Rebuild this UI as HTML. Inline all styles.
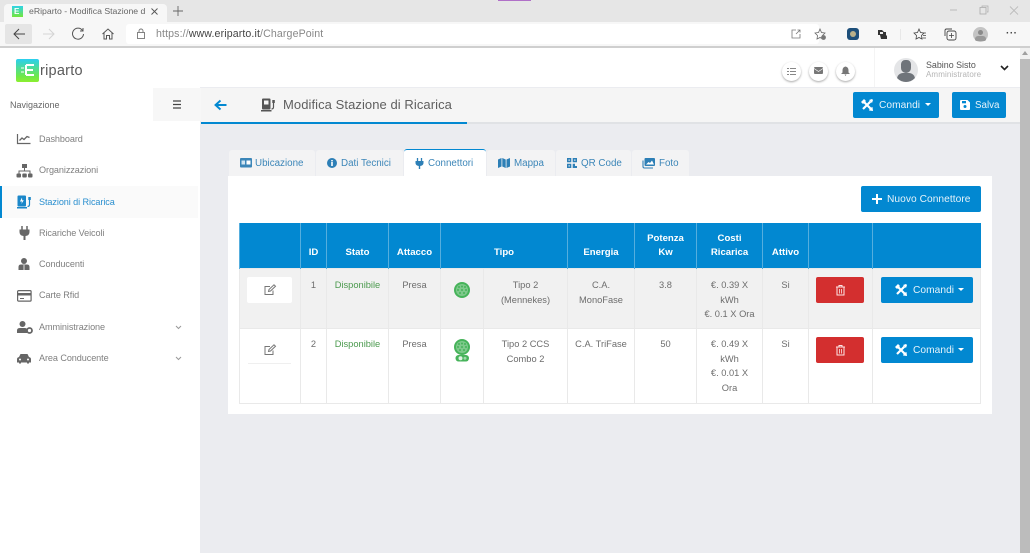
<!DOCTYPE html>
<html><head><meta charset="utf-8"><title>eRiparto</title>
<style>
html,body{margin:0;padding:0}
body{width:1030px;height:553px;overflow:hidden;position:relative;background:#ebecf0;font-family:"Liberation Sans",sans-serif;font-size:10px;color:#6c6c6c}
.a{position:absolute}
.t{position:absolute;white-space:nowrap;line-height:14px}
svg{position:absolute;overflow:visible}
.side{font-size:9.1px;color:#7f7f7f;left:39px;letter-spacing:-.08px}
.tab{position:absolute;top:150px;height:26px;background:#f3f3f4;border-radius:3px 3px 0 0;color:#3c86b8;font-size:9.8px}
.tab span{position:absolute;top:7px;white-space:nowrap;line-height:14px}
.tab svg{top:8px}
.btn{position:absolute;background:#0288d1;border-radius:2px;color:#e6f3fa;font-size:10.2px;letter-spacing:.05px}
.btn span{position:absolute;top:7px;line-height:14px;white-space:nowrap}
table{position:absolute;left:239px;top:223px;width:742px;border-collapse:collapse;table-layout:fixed;font-size:9.3px;line-height:14.6px;color:#6d6d6d}
th{background:#0288d1;color:#fff;font-size:9.6px;font-weight:bold;border:1px solid #55aede;border-top:0;border-bottom:0;padding:0;height:45px;vertical-align:middle;text-align:center;line-height:14.6px}
th.b{vertical-align:bottom;padding-bottom:7px;height:38px}
td{border:1px solid #e9e9e9;vertical-align:top;text-align:center;padding:8px 3px 0}
tr.r1 td{background:#f1f1f1;height:50px;padding-top:9px}
tr.r2 td{background:#fff;height:66px}
.g{color:#4b9a4e}
</style></head><body>

<!-- browser chrome -->
<div class="a" style="left:0;top:0;width:1030px;height:22px;background:#e6e6e6"></div>
<div class="a" style="left:498px;top:0;width:33px;height:1px;background:#b070c8"></div>
<div class="a" style="left:4px;top:4px;width:163px;height:18px;background:#f7f7f7;border-radius:4px 4px 0 0"></div>
<div class="a" style="left:12px;top:6px;width:11px;height:11px;background:linear-gradient(#2fd3e8,#74e63a)"></div>
<div class="t" style="left:14px;top:5px;font-size:8px;font-weight:bold;color:#fff">E</div>
<div class="t" style="left:29px;top:4px;font-size:8.7px;color:#666;width:116px;overflow:hidden">eRiparto - Modifica Stazione di Ri</div>
<svg style="left:150px;top:7px" width="9" height="9"><path d="M1.500 1.500L7.500 7.500M7.500 1.500L1.500 7.500" stroke="#555" stroke-width=".9"/></svg>
<svg style="left:172px;top:5px" width="12" height="12"><path d="M6 1V11M1 6H11" stroke="#666" stroke-width=".9"/></svg>
<svg style="left:950px;top:5px" width="75" height="12"><path d="M0 5H7" stroke="#bbb" stroke-width="1"/><rect x="30" y="2.500" width="6" height="6.500" fill="none" stroke="#aaa" stroke-width=".8"/><path d="M32 2V1H38V7H37" fill="none" stroke="#aaa" stroke-width=".7"/><path d="M60 1.500L68 9.500M68 1.500L60 9.500" stroke="#bbb" stroke-width=".9"/></svg>
<div class="a" style="left:0;top:22px;width:1030px;height:24px;background:#f7f7f7"></div>
<div class="a" style="left:5px;top:24px;width:27px;height:20px;background:#e5e5e5;border-radius:2px"></div>
<svg style="left:12px;top:27px" width="14" height="14"><path d="M13 7H2M7 2L2 7L7 12" fill="none" stroke="#444" stroke-width="1"/></svg>
<svg style="left:42px;top:27px" width="14" height="14"><path d="M1 7H12M7 2L12 7L7 12" fill="none" stroke="#d4d4d4" stroke-width="1"/></svg>
<svg style="left:71px;top:27px" width="14" height="14"><path d="M11.500 3.500A5.500 5.500 0 1 0 12.500 7M12 1V4H9" fill="none" stroke="#555" stroke-width="1"/></svg>
<svg style="left:101px;top:27px" width="14" height="14"><path d="M1.500 7L7 2L12.500 7M3 6V12H5.500V8.500H8.500V12H11V6" fill="none" stroke="#555" stroke-width="1"/></svg>
<div class="a" style="left:126px;top:24px;width:693px;height:20px;background:#fff;border-radius:3px"></div>
<svg style="left:136px;top:28px" width="10" height="12"><rect x="1.500" y="4.500" width="7" height="6" fill="none" stroke="#777" stroke-width=".9"/><path d="M3 4.500V3A2 2 0 0 1 7 3V4.500" fill="none" stroke="#777" stroke-width=".9"/></svg>
<div class="t" style="left:156px;top:27px;font-size:10.6px;color:#888;letter-spacing:.12px">https://<span style="color:#444">www.eriparto.it</span>/ChargePoint</div>
<svg style="left:791px;top:29px" width="10" height="10"><path d="M5 1H1V9H9V5M5 5L9 1M6.500 1H9V3.500" fill="none" stroke="#777" stroke-width=".8"/></svg>
<svg style="left:814px;top:28px" width="13" height="13"><path d="M6 1L7.500 4.500L11 5L8.500 7.500L9 11L6 9.500L3 11L3.500 7.500L1 5L4.500 4.500Z" fill="none" stroke="#666" stroke-width=".8"/><circle cx="9.500" cy="9.500" r="2.400" fill="#777"/></svg>
<div class="a" style="left:847px;top:28px;width:12px;height:12px;background:#1d4f7a;border-radius:3px"></div>
<div class="a" style="left:850px;top:31px;width:6px;height:6px;background:#b8b08a;border-radius:50%"></div>
<svg style="left:877px;top:29px" width="11" height="11"><path d="M1 1H5L7 3L9 3V6L10 7V10H4L3 6H1Z" fill="#333"/><path d="M3 3H6V5H3Z" fill="#eee"/></svg>
<div class="a" style="left:900px;top:29px;width:1px;height:11px;background:#e8e8e8"></div>
<svg style="left:913px;top:28px" width="14" height="13"><path d="M6 1L7.500 4.500L11 5L8.500 7.500L9 11L6 9.500L3 11L3.500 7.500L1 5L4.500 4.500Z" fill="none" stroke="#444" stroke-width=".8"/><path d="M9.500 5H13M10 7.500H13M9.500 10H13" stroke="#444" stroke-width=".7"/></svg>
<svg style="left:944px;top:28px" width="13" height="13"><path d="M1 8V2.500Q1 1 2.500 1H8" fill="none" stroke="#444" stroke-width=".9"/><rect x="3" y="3" width="9" height="9" rx="2" fill="none" stroke="#444" stroke-width=".9"/><path d="M7.500 5V10M5 7.500H10" stroke="#444" stroke-width=".8"/></svg>
<div class="a" style="left:973px;top:27px;width:15px;height:15px;background:#c4c4c4;border-radius:50%"></div>
<div class="a" style="left:978px;top:30px;width:5px;height:5px;background:#8a8a8a;border-radius:50%"></div>
<div class="a" style="left:975px;top:36px;width:11px;height:5px;background:#999;border-radius:5px 5px 3px 3px"></div>
<div class="t" style="left:1006px;top:27px;font-size:10px;color:#444;letter-spacing:.5px;font-weight:bold">···</div>
<div class="a" style="left:0;top:46px;width:1030px;height:2px;background:#cfcfcf"></div>

<!-- page header -->
<div class="a" style="left:0;top:48px;width:1020px;height:39px;background:#fff"></div>
<div class="a" style="left:16px;top:59px;width:23px;height:23px;border-radius:2px;background:linear-gradient(#2bcff0,#6ee84a 75%,#8cee30)"></div>
<svg style="left:20px;top:64px" width="15" height="13"><path d="M6 1H14M6 6H13M6 11H14M6 1V11" stroke="#fff" stroke-width="2" fill="none"/><path d="M1 4H4M1 8H4" stroke="#fff" stroke-width="1"/></svg>
<div class="t" style="left:40px;top:64px;font-size:14.500px;color:#5a5a5a;letter-spacing:.25px">riparto</div>

<div class="a" style="left:782px;top:62px;width:19px;height:19px;border-radius:50%;background:#fff;box-shadow:0 1px 2px rgba(0,0,0,.35)"></div>
<svg style="left:787px;top:67px" width="10" height="9"><path d="M3 1.500H9M3 4.500H9M3 7.500H9M0 1.500H2M0 4.500H2M0 7.500H2" stroke="#888" stroke-width="1"/></svg>
<div class="a" style="left:809px;top:62px;width:19px;height:19px;border-radius:50%;background:#fff;box-shadow:0 1px 2px rgba(0,0,0,.35)"></div>
<svg style="left:814px;top:67px" width="10" height="8"><rect width="9" height="7" rx="1" fill="#777"/><path d="M0 1.500L4.500 4.500L9 1.500" stroke="#fff" stroke-width=".7" fill="none"/></svg>
<div class="a" style="left:836px;top:62px;width:19px;height:19px;border-radius:50%;background:#fff;box-shadow:0 1px 2px rgba(0,0,0,.35)"></div>
<svg style="left:841px;top:66px" width="9" height="10"><path d="M4.500 0.500Q7.500 1 7.500 4.500V6.500L9 8H0L1.500 6.500V4.500Q1.500 1 4.500 0.500ZM3.500 8.500H5.500L4.500 10Z" fill="#777"/></svg>

<div class="a" style="left:874px;top:48px;width:1px;height:39px;background:#f4f4f4"></div>
<div class="a" style="left:894px;top:58px;width:24px;height:24px;border-radius:50%;background:#e4e5e7;overflow:hidden">
<div class="a" style="left:7px;top:2px;width:10px;height:13px;background:#6f747a;border-radius:5px 5px 6px 6px"></div>
<div class="a" style="left:3px;top:15px;width:18px;height:10px;background:#6f747a;border-radius:6px 6px 0 0"></div></div>
<div class="t" style="left:926px;top:58px;font-size:8.900px;color:#555">Sabino Sisto</div>
<div class="t" style="left:926px;top:68px;font-size:8px;color:#b5b5b5;letter-spacing:.1px">Amministratore</div>
<svg style="left:1000px;top:65px" width="9" height="6"><path d="M1 1L4.500 4.500L8 1" fill="none" stroke="#222" stroke-width="1.600"/></svg>

<!-- sidebar -->
<div class="a" style="left:0;top:87px;width:200px;height:466px;background:#fff"></div>
<div class="t" style="left:10px;top:98px;font-size:9px;color:#666">Navigazione</div>
<div class="a" style="left:153px;top:88px;width:48px;height:33px;background:#f7f7f7"></div>
<svg style="left:172px;top:100px" width="10" height="9"><path d="M1 1H9M1 4.500H9M1 8H9" stroke="#444" stroke-width="1.300"/></svg>
<div class="a" style="left:0;top:186px;width:198px;height:32px;background:#fafafa"></div>
<div class="a" style="left:0;top:186px;width:2px;height:32px;background:#0288d1"></div>

<svg style="left:17px;top:133px" width="14" height="12"><path d="M.5 1V10.500H13.500" fill="none" stroke="#666" stroke-width="1.200"/><path d="M2.500 7.500L5 5L7 6.500L10 3.500L12.500 4.500" fill="none" stroke="#666" stroke-width="1.300"/></svg>
<div class="t side" style="top:132px">Dashboard</div>
<svg style="left:16px;top:164px" width="17" height="14"><rect x="6" y="0" width="5" height="4" fill="#666"/><path d="M8.500 4V7M3 10V7H14V10" fill="none" stroke="#666"/><rect x="0.500" y="9.500" width="4.500" height="4" rx="1" fill="#666"/><rect x="6.300" y="9.500" width="4.500" height="4" rx="1" fill="#666"/><rect x="12" y="9.500" width="4.500" height="4" rx="1" fill="#666"/></svg>
<div class="t side" style="top:163px">Organizzazioni</div>
<svg style="left:17px;top:195px" width="15" height="14"><rect x="0.500" y="0.500" width="8.500" height="11" rx="1" fill="#1b87c9"/><path d="M5 2.500L3 6.500H5L4.300 9L6.800 5.300H5.200Z" fill="#fff"/><rect x="0" y="12" width="10" height="1.500" fill="#1b87c9"/><path d="M10.500 11.500Q12.500 11.500 12.500 9.500V5" fill="none" stroke="#1b87c9" stroke-width="1.200"/><rect x="11.300" y="2" width="2.500" height="3" fill="#1b87c9"/></svg>
<div class="t side" style="top:195px;color:#2a8fcf">Stazioni di Ricarica</div>
<svg style="left:19px;top:226px" width="11" height="14"><path d="M3 0V3.500M8 0V3.500" stroke="#666" stroke-width="1.500"/><path d="M.5 3.500H10.500V6Q10.500 9.500 6.500 10V14H4.500V10Q.5 9.500 .5 6Z" fill="#666"/></svg>
<div class="t side" style="top:226px">Ricariche Veicoli</div>
<svg style="left:18px;top:258px" width="12" height="12"><circle cx="6" cy="3" r="3" fill="#666"/><path d="M0.500 12V9Q.5 6.500 3 6.500H9Q11.500 6.500 11.500 9V12Z" fill="#666"/><path d="M6 7V12" stroke="#fff" stroke-width=".8"/></svg>
<div class="t side" style="top:257px">Conducenti</div>
<svg style="left:17px;top:290px" width="15" height="12"><rect x=".6" y=".6" width="13.500" height="10.500" rx="1" fill="none" stroke="#666" stroke-width="1.200"/><rect x="1" y="3" width="13" height="2.500" fill="#666"/><path d="M3 8.500H7" stroke="#666"/></svg>
<div class="t side" style="top:288px">Carte Rfid</div>
<svg style="left:17px;top:321px" width="16" height="13"><circle cx="5.500" cy="3" r="3" fill="#666"/><path d="M0 12V9.500Q0 7 3 7H8Q9.500 7 10 8V12Z" fill="#666"/><circle cx="12.500" cy="9.500" r="2.500" fill="none" stroke="#666" stroke-width="1.800"/></svg>
<div class="t side" style="top:320px">Amministrazione</div>
<svg style="left:175px;top:325px" width="7" height="5"><path d="M1 1L3.500 3.500L6 1" fill="none" stroke="#999" stroke-width="1"/></svg>
<svg style="left:17px;top:353px" width="14" height="11"><path d="M2 4L3.500 1H10.500L12 4Q14 4.500 14 6V9.500H12V10.500H10V9.500H4V10.500H2V9.500H0V6Q0 4.500 2 4Z" fill="#666"/><circle cx="3" cy="6.500" r="1" fill="#fff"/><circle cx="11" cy="6.500" r="1" fill="#fff"/></svg>
<div class="t side" style="top:351px">Area Conducente</div>
<svg style="left:175px;top:356px" width="7" height="5"><path d="M1 1L3.500 3.500L6 1" fill="none" stroke="#999" stroke-width="1"/></svg>

<!-- title bar -->
<div class="a" style="left:201px;top:88px;width:819px;height:34px;background:#f5f5f5"></div>
<div class="a" style="left:201px;top:122px;width:819px;height:2px;background:#e0e2e5"></div>
<div class="a" style="left:201px;top:122px;width:266px;height:2px;background:#0288d1"></div>
<svg style="left:214px;top:99px" width="13" height="12"><path d="M12.500 6H2M6.500 1.500L1.500 6L6.500 10.500" fill="none" stroke="#0288d1" stroke-width="1.900"/></svg>
<svg style="left:261px;top:98px" width="15" height="14"><rect x="1" y="0.500" width="8.500" height="11" rx="1" fill="#555"/><rect x="3" y="2.500" width="4.500" height="4" fill="#f5f5f5"/><rect x="0" y="12" width="10.500" height="1.500" fill="#555"/><path d="M10.500 11Q12.500 11 12.500 9V5" fill="none" stroke="#555" stroke-width="1.200"/><rect x="11.300" y="2" width="2.500" height="3" fill="#555"/></svg>
<div class="t" style="left:283px;top:98px;font-size:13px;color:#5f5f5f;letter-spacing:.07px">Modifica Stazione di Ricarica</div>

<div class="btn" style="left:853px;top:92px;width:86px;height:26px"><svg style="left:8px;top:7px" width="12" height="12"><path d="M3 3L10 10M9.500 2.500L2 10" stroke="#fff" stroke-width="2.200"/><path d="M0 3L3 0L5 2L2 5ZM9 9L11.500 8L12 12L8 11.500Z" fill="#fff"/><path d="M8 1L11 0L12 1L11 4Z" fill="#fff"/></svg><span style="left:26px">Comandi</span><svg style="left:72px;top:11px" width="6" height="4"><path d="M0 0H6L3 3Z" fill="#fff"/></svg></div>
<div class="btn" style="left:952px;top:92px;width:54px;height:26px"><svg style="left:8px;top:8px" width="10" height="10"><path d="M0 1Q0 0 1 0H7.500L10 2.500V9Q10 10 9 10H1Q0 10 0 9Z" fill="#fff"/><rect x="2" y="1" width="4" height="2.300" fill="#0288d1"/><circle cx="5" cy="6.500" r="1.500" fill="#0288d1"/></svg><span style="left:23px;font-size:9.800px;letter-spacing:0">Salva</span></div>

<!-- tabs -->
<div class="tab" style="left:229px;width:86px"><svg style="left:11px" width="12" height="10"><rect width="12" height="9.500" rx="1" fill="#3c86b8"/><rect x="6.500" y="2.500" width="4" height="4" fill="#fff"/><rect x="1.500" y="2.500" width="3.500" height="4" fill="#cfe4f2"/></svg><span style="left:26px">Ubicazione</span></div>
<div class="tab" style="left:316px;width:87px"><svg style="left:11px" width="10" height="10"><circle cx="5" cy="5" r="5" fill="#2d7fb6"/><rect x="4.200" y="4" width="1.600" height="4" fill="#fff"/><rect x="4.200" y="2" width="1.600" height="1.400" fill="#fff"/></svg><span style="left:25px">Dati Tecnici</span></div>
<div class="tab" style="left:404px;top:149px;width:82px;background:#fff;border-top:1px solid #0288d1;height:26px"><svg style="left:11px" width="9" height="11"><path d="M2.500 0V3M6.500 0V3" stroke="#2d7fb6" stroke-width="1.300"/><path d="M.5 3H8.500V5Q8.500 7.500 5.200 8V11H3.800V8Q.5 7.500 .5 5Z" fill="#2d7fb6"/></svg><span style="left:24px">Connettori</span></div>
<div class="tab" style="left:487px;width:68px"><svg style="left:11px" width="12" height="10"><path d="M0 1.500L3.500 0V8.500L0 10ZM4.300 0L7.700 1.500V10L4.300 8.500ZM8.500 1.500L12 0V8.500L8.500 10Z" fill="#2d7fb6"/></svg><span style="left:27px">Mappa</span></div>
<div class="tab" style="left:556px;width:75px"><svg style="left:11px" width="10" height="10"><path d="M0 0H4.300V4.300H0ZM5.700 0H10V4.300H5.700ZM0 5.700H4.300V10H0ZM5.700 5.700H8V8H10V10H5.700Z" fill="#2d7fb6"/><path d="M1.500 1.500H2.800V2.800H1.500ZM7.200 1.500H8.500V2.800H7.200ZM1.500 7.200H2.800V8.500H1.500Z" fill="#f3f3f4"/></svg><span style="left:25px">QR Code</span></div>
<div class="tab" style="left:632px;width:57px"><svg style="left:11px" width="12" height="10"><rect x="1.500" y="0" width="10.500" height="8" rx="1" fill="#2d7fb6"/><path d="M3 6.500L5.500 4L7 5L9 2.500L11 6.500Z" fill="#fff"/><path d="M0 2.500V8.500Q0 10 1.500 10H10" fill="none" stroke="#2d7fb6" stroke-width="1.100"/></svg><span style="left:27px">Foto</span></div>

<!-- card -->
<div class="a" style="left:228px;top:176px;width:764px;height:238px;background:#fff"></div>
<div class="btn" style="left:861px;top:186px;width:120px;height:26px"><svg style="left:11px;top:8px" width="10" height="10"><path d="M5 0V10M0 5H10" stroke="#fff" stroke-width="2"/></svg><span style="left:26px">Nuovo Connettore</span></div>

<table>
<colgroup><col style="width:61px"><col style="width:26px"><col style="width:62px"><col style="width:52px"><col style="width:43px"><col style="width:84px"><col style="width:67px"><col style="width:62px"><col style="width:66px"><col style="width:46px"><col style="width:64px"><col style="width:109px"></colgroup>
<tr>
<th></th><th class="b">ID</th><th class="b">Stato</th><th class="b">Attacco</th><th class="b" colspan="2">Tipo</th><th class="b">Energia</th><th class="b">Potenza<br>Kw</th><th class="b">Costi<br>Ricarica</th><th class="b">Attivo</th><th></th><th></th>
</tr>
<tr class="r1">
<td></td><td>1</td><td class="g">Disponibile</td><td>Presa</td><td></td><td>Tipo 2<br>(Mennekes)</td><td>C.A.<br>MonoFase</td><td>3.8</td><td>€. 0.39 X<br>kWh<br>€. 0.1 X Ora</td><td>Si</td><td></td><td></td>
</tr>
<tr class="r2">
<td></td><td>2</td><td class="g">Disponibile</td><td>Presa</td><td></td><td>Tipo 2 CCS<br>Combo 2</td><td>C.A. TriFase</td><td>50</td><td>€. 0.49 X<br>kWh<br>€. 0.01 X<br>Ora</td><td>Si</td><td></td><td></td>
</tr>
</table>
<div class="a" style="left:981px;top:223px;width:2px;height:182px;background:#fff"></div>
<div class="a" style="left:980px;top:223px;width:1px;height:45px;background:#0288d1"></div>
<div class="a" style="left:980px;top:268px;width:1px;height:136px;background:#e9e9e9"></div>

<!-- row controls -->
<div class="a" style="left:247px;top:277px;width:45px;height:26px;background:#fff;border-radius:2px"></div>
<svg style="left:264px;top:284px" width="12" height="12"><path d="M9 6.500V10.500H1V2.500H6" fill="none" stroke="#777" stroke-width="1"/><path d="M4.500 7.500L5 5.500L10 .8L11.500 2.200L6.500 7Z" fill="none" stroke="#777" stroke-width="1"/></svg>
<div class="a" style="left:248px;top:363px;width:43px;height:1px;background:#efefef"></div>
<svg style="left:264px;top:344px" width="12" height="12"><path d="M9 6.500V10.500H1V2.500H6" fill="none" stroke="#777" stroke-width="1"/><path d="M4.500 7.500L5 5.500L10 .8L11.500 2.200L6.500 7Z" fill="none" stroke="#777" stroke-width="1"/></svg>

<svg style="left:454px;top:282px" width="16" height="16"><circle cx="8" cy="8" r="8" fill="#46b35a"/><circle cx="8" cy="8" r="6" fill="#7ec98b"/><g fill="#46b35a"><circle cx="5" cy="5" r="1"/><circle cx="8" cy="4.500" r="1"/><circle cx="11" cy="5" r="1"/><circle cx="4" cy="8" r="1"/><circle cx="8" cy="8" r="1"/><circle cx="12" cy="8" r="1"/><circle cx="6" cy="11" r="1"/><circle cx="10" cy="11" r="1"/></g></svg>
<svg style="left:454px;top:339px" width="16" height="23"><circle cx="8" cy="8" r="8" fill="#46b35a"/><circle cx="8" cy="8" r="6" fill="#7ec98b"/><g fill="#46b35a"><circle cx="5" cy="5" r="1"/><circle cx="8" cy="4.500" r="1"/><circle cx="11" cy="5" r="1"/><circle cx="4" cy="8" r="1"/><circle cx="8" cy="8" r="1"/><circle cx="12" cy="8" r="1"/><circle cx="6" cy="11" r="1"/><circle cx="10" cy="11" r="1"/></g><rect x="1.500" y="16" width="13.500" height="6.500" rx="3.200" fill="#46b35a"/><circle cx="6.500" cy="19.200" r="2" fill="#dff2e2"/><circle cx="11" cy="19.200" r="1.500" fill="#9fd8aa"/></svg>

<div class="a" style="left:816px;top:277px;width:48px;height:26px;background:#d32f2f;border-radius:2px"></div>
<svg style="left:836px;top:285px" width="9" height="10"><path d="M0 2H9M3 2V.5H6V2M1 2.500V10H8V2.500" fill="none" stroke="#fbe4e4" stroke-width="1"/><path d="M3.500 4V8.500M5.500 4V8.500" stroke="#fbe4e4" stroke-width=".8"/></svg>
<div class="a" style="left:816px;top:337px;width:48px;height:26px;background:#d32f2f;border-radius:2px"></div>
<svg style="left:836px;top:345px" width="9" height="10"><path d="M0 2H9M3 2V.5H6V2M1 2.500V10H8V2.500" fill="none" stroke="#fbe4e4" stroke-width="1"/><path d="M3.500 4V8.500M5.500 4V8.500" stroke="#fbe4e4" stroke-width=".8"/></svg>

<div class="btn" style="left:881px;top:277px;width:92px;height:26px"><svg style="left:14px;top:7px" width="12" height="12"><path d="M3 3L10 10M9.500 2.500L2 10" stroke="#fff" stroke-width="2.200"/><path d="M0 3L3 0L5 2L2 5ZM9 9L11.500 8L12 12L8 11.500Z" fill="#fff"/><path d="M8 1L11 0L12 1L11 4Z" fill="#fff"/></svg><span style="left:32px">Comandi</span><svg style="left:77px;top:11px" width="6" height="4"><path d="M0 0H6L3 3Z" fill="#fff"/></svg></div>
<div class="btn" style="left:881px;top:337px;width:92px;height:26px"><svg style="left:14px;top:7px" width="12" height="12"><path d="M3 3L10 10M9.500 2.500L2 10" stroke="#fff" stroke-width="2.200"/><path d="M0 3L3 0L5 2L2 5ZM9 9L11.500 8L12 12L8 11.500Z" fill="#fff"/><path d="M8 1L11 0L12 1L11 4Z" fill="#fff"/></svg><span style="left:32px">Comandi</span><svg style="left:77px;top:11px" width="6" height="4"><path d="M0 0H6L3 3Z" fill="#fff"/></svg></div>

<!-- scrollbar -->
<div class="a" style="left:1020px;top:48px;width:10px;height:505px;background:#f1f1f1"></div>
<div class="a" style="left:1020px;top:59px;width:10px;height:494px;background:#bcbcbc"></div>
<svg style="left:1022px;top:51px" width="6" height="4"><path d="M0 4H6L3 0Z" fill="#a0a0a0"/></svg>
</body></html>
